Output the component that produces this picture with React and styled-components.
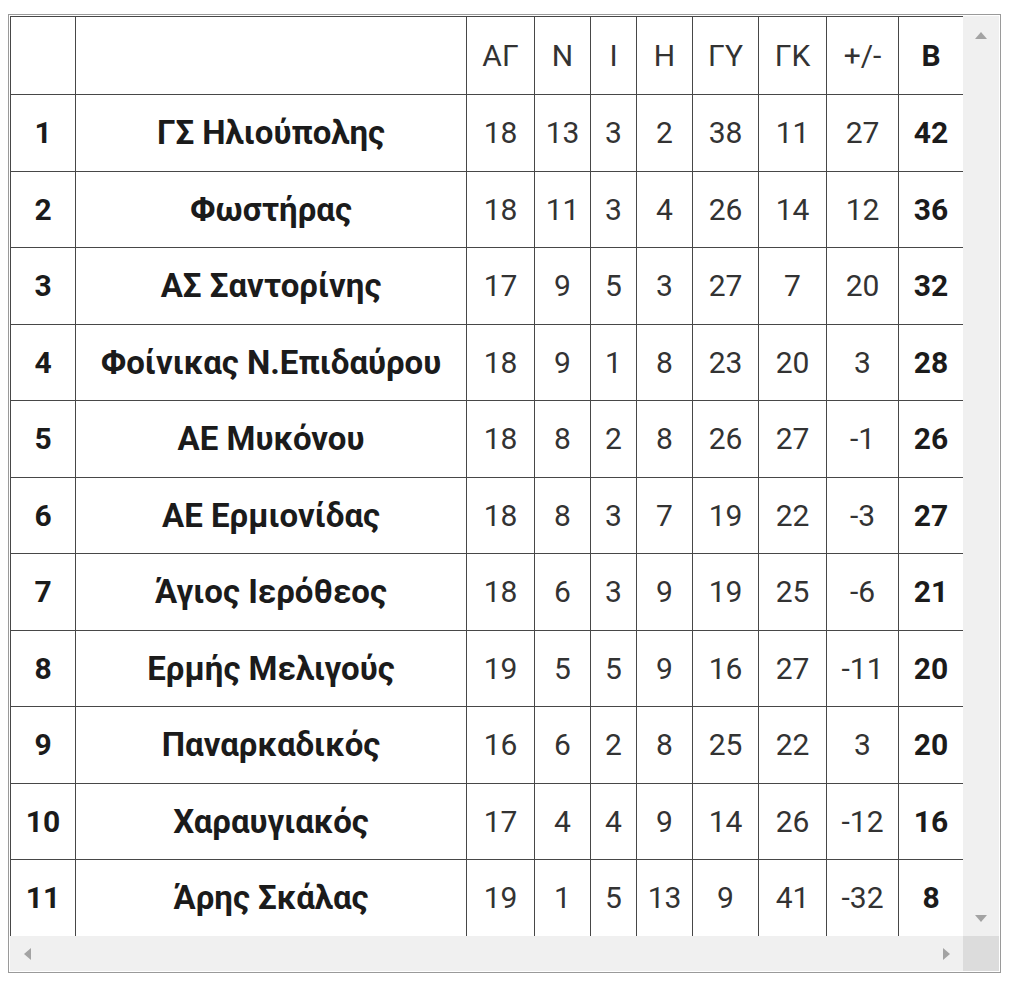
import React from 'react'
import styled, { createGlobalStyle } from 'styled-components'

const standings = [
  [1, 'ΓΣ Ηλιούπολης', 18, 13, 3, 2, 38, 11, 27, 42],
  [2, 'Φωστήρας', 18, 11, 3, 4, 26, 14, 12, 36],
  [3, 'ΑΣ Σαντορίνης', 17, 9, 5, 3, 27, 7, 20, 32],
  [4, 'Φοίνικας Ν.Επιδαύρου', 18, 9, 1, 8, 23, 20, 3, 28],
  [5, 'ΑΕ Μυκόνου', 18, 8, 2, 8, 26, 27, -1, 26],
  [6, 'ΑΕ Ερμιονίδας', 18, 8, 3, 7, 19, 22, -3, 27],
  [7, 'Άγιος Ιερόθεος', 18, 6, 3, 9, 19, 25, -6, 21],
  [8, 'Ερμής Μελιγούς', 19, 5, 5, 9, 16, 27, -11, 20],
  [9, 'Παναρκαδικός', 16, 6, 2, 8, 25, 22, 3, 20],
  [10, 'Χαραυγιακός', 17, 4, 4, 9, 14, 26, -12, 16],
  [11, 'Άρης Σκάλας', 19, 1, 5, 13, 9, 41, -32, 8],
]

const headers = ['', '', 'ΑΓ', 'Ν', 'Ι', 'Η', 'ΓΥ', 'ΓΚ', '+/-', 'Β']
const widths = [65, 391, 68, 56, 46, 56, 66, 68, 72, 65]

const GlobalStyle = createGlobalStyle`
  body {
    margin: 0;
    background: #fff;
    font-family: Roboto, "Noto Sans", sans-serif;
  }
`

function App() {
  return (
    <>
      <GlobalStyle />
      <Frame>
        <Viewport>
          <Table>
            <colgroup>
              {widths.map((w, i) => (
                <col key={i} style={{ width: w }} />
              ))}
            </colgroup>
            <thead>
              <HeadRow>
                {headers.map((h, i) => (
                  <Cell key={i} bold={i === 9}>
                    {h}
                  </Cell>
                ))}
              </HeadRow>
            </thead>
            <tbody>
              {standings.map((row) => (
                <Row key={row[0]}>
                  {row.map((v, i) =>
                    i === 1 ? (
                      <TeamCell key={i}>{v}</TeamCell>
                    ) : (
                      <Cell key={i} bold={i === 0 || i === 9}>
                        {v}
                      </Cell>
                    )
                  )}
                </Row>
              ))}
            </tbody>
          </Table>
        </Viewport>
        <VScroll>
          <Arrow dir='up' />
          <Arrow dir='down' />
        </VScroll>
        <HScroll>
          <Arrow dir='left' />
          <Arrow dir='right' />
        </HScroll>
        <Corner />
      </Frame>
    </>
  )
}

export default App

const Frame = styled.div`
  display: grid;
  grid-template-columns: 953px 36px;
  grid-template-rows: 920px 35px;
  width: max-content;
  margin: 14px 0 0 8px;
  border: 1px solid #9a9a9a;
  padding: 1px;
  background: #fff;
`

const Viewport = styled.div`
  overflow: hidden;
`

const Table = styled.table`
  table-layout: fixed;
  width: 953px;
  border-collapse: collapse;
  border: 1px solid #444;
`

const HeadRow = styled.tr`
  height: 78px;
`

const Row = styled.tr`
  height: 76.5px;
`

const Cell = styled.td`
  border: 1px solid #474747;
  padding: 0;
  text-align: center;
  vertical-align: middle;
  font-size: 30px;
  font-weight: ${({ bold }) => (bold ? 700 : 400)};
  color: ${({ bold }) => (bold ? '#1b1b1b' : '#333')};
  white-space: nowrap;
`

const TeamCell = styled(Cell)`
  font-size: 33px;
  font-weight: 700;
  color: #1b1b1b;
`

const VScroll = styled.div`
  background: #f0f0f0;
  display: flex;
  flex-direction: column;
  align-items: center;
  justify-content: space-between;
  padding: 16px 0 14px;
`

const HScroll = styled.div`
  background: #f0f0f0;
  display: flex;
  align-items: center;
  justify-content: space-between;
  padding: 0 13px 0 14px;
`

const Corner = styled.div`
  background: #dcdcdc;
`

const Arrow = styled.span`
  width: 0;
  height: 0;
  border-style: solid;
  border-color: transparent;
  ${({ dir }) =>
    dir === 'up'
      ? 'border-width: 0 6px 7px; border-bottom-color: #a3a3a3;'
      : dir === 'down'
      ? 'border-width: 7px 6px 0; border-top-color: #a3a3a3;'
      : dir === 'left'
      ? 'border-width: 6px 7px 6px 0; border-right-color: #a3a3a3;'
      : 'border-width: 6px 0 6px 7px; border-left-color: #a3a3a3;'}
`
